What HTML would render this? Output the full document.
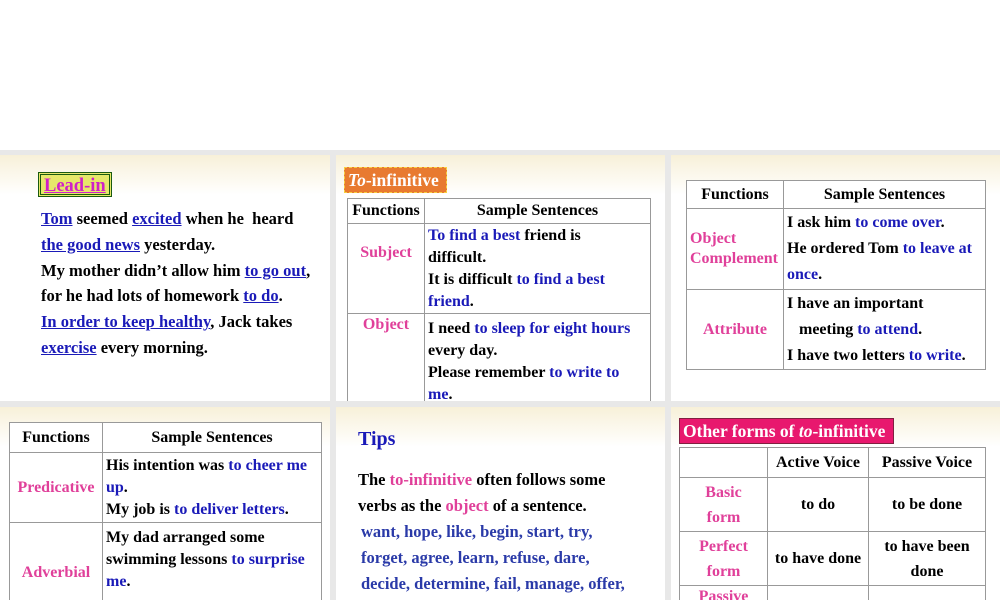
<!DOCTYPE html>
<html><head><meta charset="utf-8"><style>
*{margin:0;padding:0;box-sizing:border-box}
body{width:1000px;height:600px;overflow:hidden;background:#fff;font-family:"Liberation Serif",serif;font-weight:bold;position:relative}
.gray{position:absolute;left:0;top:150px;width:1000px;height:450px;background:#e8e8e8}
.s{position:absolute;background:linear-gradient(#f7f0d8 0px,#fbf7ea 18px,#fff 40px);overflow:hidden}
.a{position:absolute;white-space:nowrap;font-size:16.5px;line-height:25.8px}
.b{color:#1a1ab8}.u{text-decoration:underline}
.p{color:#e0409a}
table{position:absolute;border-collapse:collapse;font-size:16px;background:#fff}
td{border:1px solid #999;vertical-align:middle;padding:0 3px;line-height:22px}
.c{text-align:center}
</style></head><body>
<div class="gray"></div>

<div class="s" style="left:0;top:155px;width:330px;height:246px">
 <div class="a" style="left:38px;top:17px;height:25px;line-height:22px;border:3px double #1a5a10;background:#e6e86a;padding:0 3px;color:#d020c8;font-size:18.5px;text-decoration:underline">Lead-in</div>
 <div class="a" style="left:41px;top:51px"><span class="b u">Tom</span> seemed <span class="b u">excited</span> when he&nbsp; heard<br><span class="b u">the good news</span> yesterday.<br>My mother didn’t allow him <span class="b u">to go out</span>,<br>for he had lots of homework <span class="b u">to do</span>.<br><span class="b u">In order to keep healthy</span>, Jack takes<br><span class="b u">exercise</span> every morning.</div>
</div>

<div class="s" style="left:336px;top:155px;width:329px;height:246px">
 <div class="a" style="left:8px;top:12px;height:26px;line-height:24px;background:#e87a30;border:1px dashed #f8d040;color:#fff;font-size:17.5px;padding:0 3px"><i>To</i>-infinitive&nbsp;</div>
 <table style="left:11px;top:43px;width:304px">
  <tr><td class="c" style="width:77px;height:25px">Functions</td><td class="c">Sample Sentences</td></tr>
  <tr><td class="c p" style="vertical-align:top;padding-top:18px">Subject</td><td style="height:90px"><span class="b">To find a best</span> friend is<br>difficult.<br>It is difficult <span class="b">to find a best<br>friend</span>.</td></tr>
  <tr><td class="c p" style="vertical-align:top">Object</td><td style="height:100px;vertical-align:top;padding-top:4px">I need <span class="b">to sleep for eight hours</span><br>every day.<br>Please remember <span class="b">to write to<br>me</span>.</td></tr>
 </table>
</div>

<div class="s" style="left:671px;top:155px;width:329px;height:246px">
 <table style="left:15px;top:25px;width:300px">
  <tr><td class="c" style="width:97px;height:28px">Functions</td><td class="c">Sample Sentences</td></tr>
  <tr><td class="p" style="height:81px;line-height:20px">Object<br>Complement</td><td style="line-height:26px">I ask him <span class="b">to come over</span>.<br>He ordered Tom <span class="b">to leave at<br>once</span>.</td></tr>
  <tr><td class="c p">Attribute</td><td style="height:80px;line-height:26px">I have an important<br>&nbsp;&nbsp; meeting <span class="b">to attend</span>.<br>I have two letters <span class="b">to write</span>.</td></tr>
 </table>
</div>

<div class="s" style="left:0;top:407px;width:330px;height:193px">
 <table style="left:9px;top:15px;width:313px">
  <tr><td class="c" style="width:93px;height:30px">Functions</td><td class="c">Sample Sentences</td></tr>
  <tr><td class="c p">Predicative</td><td style="height:70px">His intention was <span class="b">to cheer me<br>up</span>.<br>My job is <span class="b">to deliver letters</span>.</td></tr>
  <tr><td class="c p">Adverbial</td><td style="height:100px;vertical-align:top;padding-top:4px">My dad arranged some<br>swimming lessons <span class="b">to surprise<br>me</span>.</td></tr>
 </table>
</div>

<div class="s" style="left:336px;top:407px;width:329px;height:193px">
 <div class="a" style="left:22px;top:20px;color:#1a1ab8;font-size:20px">Tips</div>
 <div class="a" style="left:22px;top:60px;font-size:16.5px">The <span class="p">to-infinitive</span> often follows some<br>verbs as the <span class="p">object</span> of a sentence.</div>
 <div class="a" style="left:25px;top:112px;color:#2a3aa8;font-size:16.5px">want, hope, like, begin, start, try,<br>forget, agree, learn, refuse, dare,<br>decide, determine, fail, manage, offer,</div>
</div>

<div class="s" style="left:671px;top:407px;width:329px;height:193px">
 <div class="a" style="left:8px;top:11px;height:26px;line-height:25px;background:#e8186e;border:1px solid #802040;color:#fff;font-size:17.5px;padding:0 3px">Other forms of <i>to</i>-infinitive&nbsp;</div>
 <table style="left:8px;top:40px;width:307px">
  <tr><td style="width:88px;height:30px"></td><td class="c" style="width:101px">Active Voice</td><td class="c">Passive Voice</td></tr>
  <tr><td class="c p" style="height:54px;line-height:25px">Basic<br>form</td><td class="c">to do</td><td class="c">to be done</td></tr>
  <tr><td class="c p" style="height:54px;line-height:25px">Perfect<br>form</td><td class="c">to have done</td><td class="c" style="line-height:25px">to have been<br>done</td></tr>
  <tr><td class="c p" style="height:40px;vertical-align:top">Passive</td><td></td><td></td></tr>
 </table>
</div>
</body></html>
